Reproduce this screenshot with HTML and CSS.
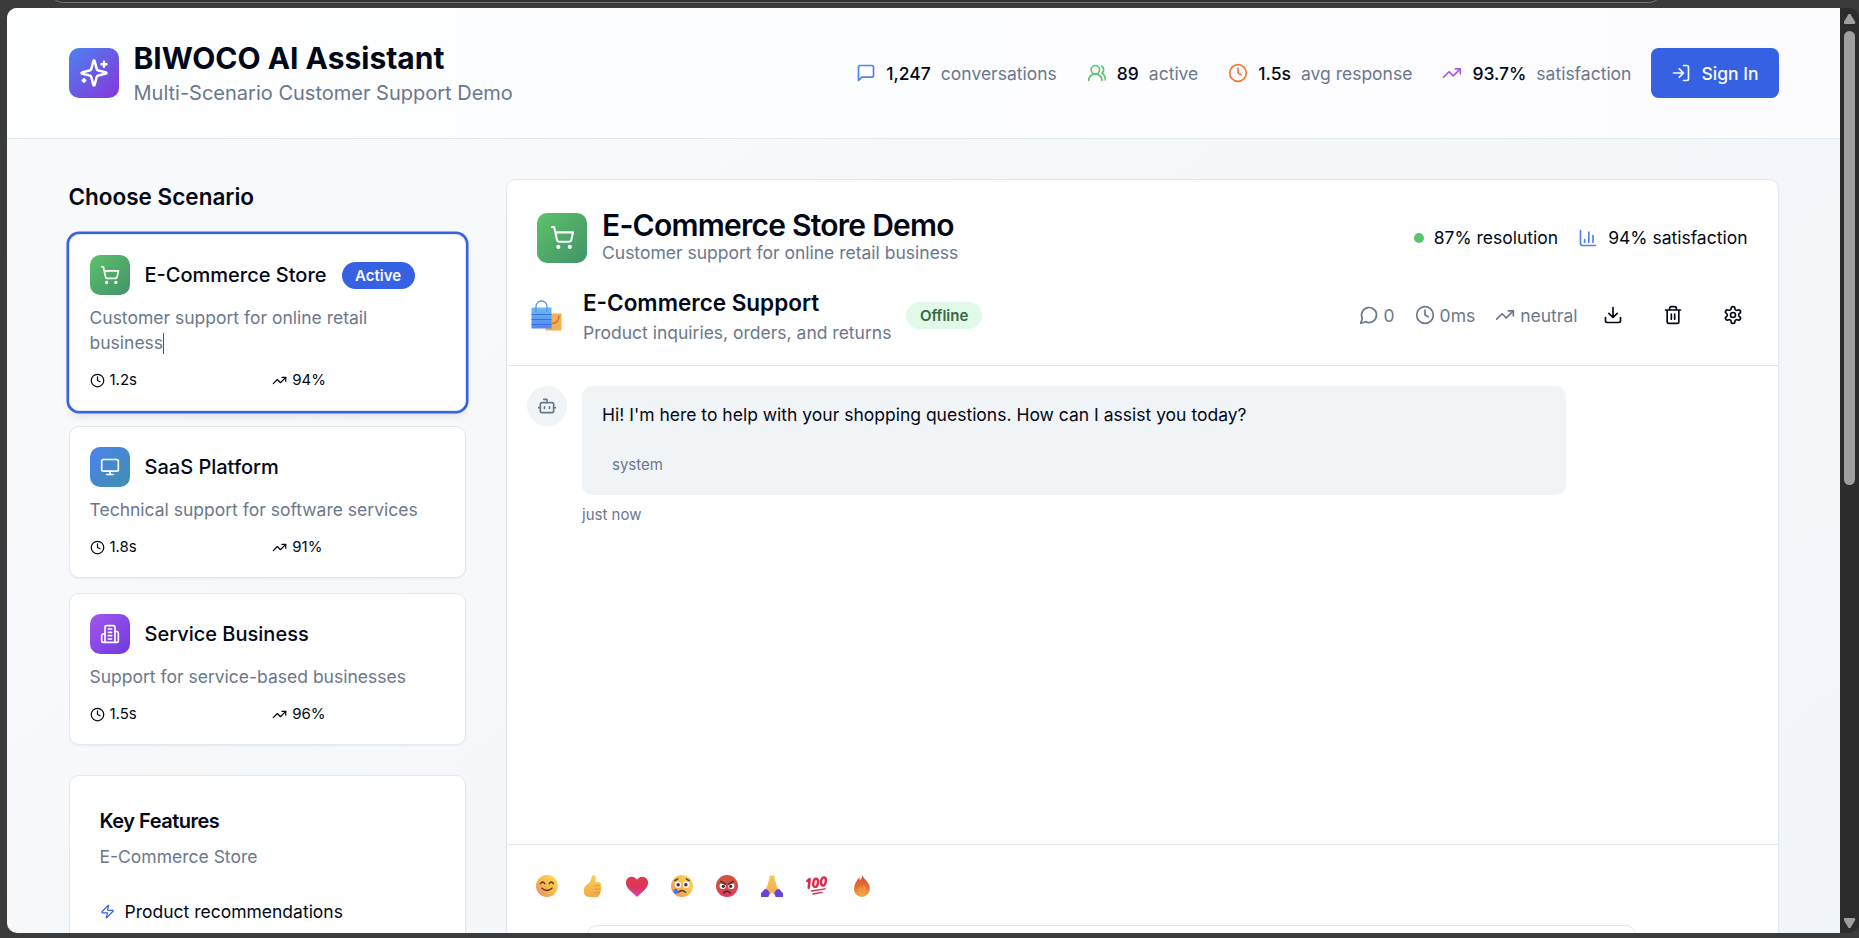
FILE: index.html
```html
<!DOCTYPE html>
<html lang="en">
<head>
<meta charset="utf-8">
<title>BIWOCO AI Assistant</title>
<link rel="stylesheet" href="styles.css">
</head>
<body>
<svg class="defs" width="0" height="0" aria-hidden="true">
  <defs>
    <linearGradient id="face" x1="1" y1="0" x2="0" y2="1"><stop offset="0" stop-color="#fbe05a"/><stop offset=".55" stop-color="#f6b84a"/><stop offset="1" stop-color="#e9836a"/></linearGradient>
    <linearGradient id="rage" x1="0" y1="0" x2="0" y2="1"><stop offset="0" stop-color="#cf5a3e"/><stop offset="1" stop-color="#dc3a58"/></linearGradient>
    <linearGradient id="heartfill" x1="0" y1="0" x2="0" y2="1"><stop offset="0" stop-color="#e23a4e"/><stop offset=".5" stop-color="#d93558"/><stop offset="1" stop-color="#e045b4"/></linearGradient>
    <linearGradient id="skin" x1="0" y1="0" x2="0" y2="1"><stop offset="0" stop-color="#fbcf52"/><stop offset="1" stop-color="#efa84a"/></linearGradient>
    <linearGradient id="flame" x1="0" y1="0" x2="0" y2="1"><stop offset="0" stop-color="#d9482f"/><stop offset=".6" stop-color="#e8743a"/><stop offset="1" stop-color="#f3b04a"/></linearGradient>
    <linearGradient id="bag" x1="0" y1="0" x2="0" y2="1"><stop offset="0" stop-color="#6bbcf5"/><stop offset="1" stop-color="#5087f2"/></linearGradient>
    <symbol id="i-clock" viewBox="0 0 24 24"><circle cx="12" cy="12" r="10"/><path d="M12 6v6l4 2"/></symbol>
    <symbol id="i-trend" viewBox="0 0 24 24"><path d="M22 7l-8.500 8.500-5-5L2 17"/><path d="M16 7h6v6"/></symbol>
    <symbol id="i-cart" viewBox="0 0 24 24"><circle cx="8" cy="21" r="1"/><circle cx="19" cy="21" r="1"/><path d="M2.050 2.050h2l2.660 12.420a2 2 0 0 0 2 1.580h9.780a2 2 0 0 0 1.950-1.570l1.650-7.430H5.120"/></symbol>
  </defs>
</svg>

<div class="browser">
  <div class="toolbar"><div class="address"></div></div>
  <div class="window">
    <div class="page">
      <header class="site-header">
        <div class="container header-row">
          <div class="brand">
            <span class="tile tile-lg brand-tile"><svg class="ic s30" viewBox="0 0 24 24"><path d="M9.937 15.500A2 2 0 0 0 8.500 14.063l-6.135-1.582a.5.5 0 0 1 0-.962L8.500 9.936A2 2 0 0 0 9.937 8.500l1.582-6.135a.5.5 0 0 1 .963 0L14.063 8.500A2 2 0 0 0 15.500 9.937l6.135 1.581a.5.5 0 0 1 0 .964L15.500 14.063a2 2 0 0 0-1.437 1.437l-1.582 6.135a.5.5 0 0 1-.963 0z"/><path d="M20 3v4M22 5h-4M4 17v2M5 18H3"/></svg></span>
            <div>
              <h1 class="brand-name">BIWOCO AI Assistant</h1>
              <p class="brand-sub">Multi-Scenario Customer Support Demo</p>
            </div>
          </div>
          <div class="header-right">
            <div class="stats">
              <div class="stat"><svg class="ic s20 blue" viewBox="0 0 24 24"><path d="M21 15a2 2 0 0 1-2 2H7l-4 4V5a2 2 0 0 1 2-2h14a2 2 0 0 1 2 2z"/></svg><b>1,247</b><span>conversations</span></div>
              <div class="stat"><svg class="ic s20 green" viewBox="0 0 24 24"><path d="M18 21a8 8 0 0 0-16 0"/><circle cx="10" cy="8" r="5"/><path d="M22 20c0-3.370-2-6.500-4-8a5 5 0 0 0-.45-8.300"/></svg><b>89</b><span>active</span></div>
              <div class="stat"><svg class="ic s20 orange"><use href="#i-clock"/></svg><b>1.5s</b><span>avg response</span></div>
              <div class="stat"><svg class="ic s20 purple"><use href="#i-trend"/></svg><b>93.7%</b><span>satisfaction</span></div>
            </div>
            <button class="sign-in"><svg class="ic s20" viewBox="0 0 24 24"><path d="M15 3h4a2 2 0 0 1 2 2v14a2 2 0 0 1-2 2h-4"/><path d="M10 17l5-5-5-5M15 12H3"/></svg>Sign In</button>
          </div>
        </div>
      </header>

      <main class="container layout">
        <aside>
          <h2 class="side-title">Choose Scenario</h2>
          <div class="scenarios">
            <article class="card scenario selected">
              <div class="scenario-head"><span class="tile green-tile"><svg class="ic s20"><use href="#i-cart"/></svg></span><h3>E-Commerce Store</h3><span class="badge badge-active">Active</span></div>
              <p class="desc">Customer support for online retail<br>business<span class="caret"></span></p>
              <div class="metrics"><span><svg class="ic s15"><use href="#i-clock"/></svg>1.2s</span><span><svg class="ic s15"><use href="#i-trend"/></svg>94%</span></div>
            </article>
            <article class="card scenario">
              <div class="scenario-head"><span class="tile blue-tile"><svg class="ic s20" viewBox="0 0 24 24"><rect x="2" y="3" width="20" height="14" rx="2"/><path d="M8 21h8M12 17v4"/></svg></span><h3>SaaS Platform</h3></div>
              <p class="desc">Technical support for software services</p>
              <div class="metrics"><span><svg class="ic s15"><use href="#i-clock"/></svg>1.8s</span><span><svg class="ic s15"><use href="#i-trend"/></svg>91%</span></div>
            </article>
            <article class="card scenario">
              <div class="scenario-head"><span class="tile purple-tile"><svg class="ic s20" viewBox="0 0 24 24"><path d="M6 22V4a2 2 0 0 1 2-2h8a2 2 0 0 1 2 2v18Z"/><path d="M6 12H4a2 2 0 0 0-2 2v6a2 2 0 0 0 2 2h2M18 9h2a2 2 0 0 1 2 2v9a2 2 0 0 1-2 2h-2M10 6h4M10 10h4M10 14h4M10 18h4"/></svg></span><h3>Service Business</h3></div>
              <p class="desc">Support for service-based businesses</p>
              <div class="metrics"><span><svg class="ic s15"><use href="#i-clock"/></svg>1.5s</span><span><svg class="ic s15"><use href="#i-trend"/></svg>96%</span></div>
            </article>
          </div>
          <section class="card features">
            <h3>Key Features</h3>
            <p class="features-sub">E-Commerce Store</p>
            <div class="feature"><svg class="ic s15 primary" viewBox="0 0 24 24"><path d="M4 14a1 1 0 0 1-.78-1.630l9.900-10.200a.5.5 0 0 1 .86.460l-1.920 6.020A1 1 0 0 0 13 10h7a1 1 0 0 1 .78 1.630l-9.900 10.200a.5.5 0 0 1-.86-.460l1.920-6.020A1 1 0 0 0 11 14z"/></svg>Product recommendations</div>
          </section>
        </aside>

        <section class="card chat">
          <div class="demo-head">
            <div class="demo-id">
              <span class="tile tile-lg green-tile"><svg class="ic s25"><use href="#i-cart"/></svg></span>
              <div><h2 class="demo-title">E-Commerce Store Demo</h2><p class="demo-sub">Customer support for online retail business</p></div>
            </div>
            <div class="demo-stats">
              <span><i class="dot"></i>87% resolution</span>
              <span><svg class="ic s20 blue" viewBox="0 0 24 24"><path d="M3 3v16a2 2 0 0 0 2 2h16M18 17V9M13 17V5M8 17v-3"/></svg>94% satisfaction</span>
            </div>
          </div>

          <div class="chat-head">
            <div class="agent">
              <svg class="bags" viewBox="0 0 41 35">
                <rect x="18.500" y="15.500" width="16" height="17" rx=".8" fill="#f2b04e"/>
                <path d="M32 17.500c0 5-2.500 8-7.500 8" fill="none" stroke="#d9693f" stroke-width="1.400"/>
                <path d="M5 9.500h19.500V30.500h-20V10.500z" fill="url(#bag)"/>
                <path d="M4.500 16.500h20M4.500 21.500h20M4.500 26.500h20" stroke="#3f6fda" stroke-width="1"/>
                <path d="M9 13.500V8.500a5.500 5.500 0 0 1 11 0v5" fill="none" stroke="#4f95df" stroke-width="1.300"/>
              </svg>
              <div><h3 class="agent-name">E-Commerce Support</h3><p class="agent-sub">Product inquiries, orders, and returns</p></div>
              <span class="badge badge-offline">Offline</span>
            </div>
            <div class="tools">
              <div class="session">
                <span><svg class="ic s20" viewBox="0 0 24 24"><path d="M7.900 20A9 9 0 1 0 4 16.100L2 22Z"/></svg>0</span>
                <span><svg class="ic s20"><use href="#i-clock"/></svg>0ms</span>
                <span><svg class="ic s20"><use href="#i-trend"/></svg>neutral</span>
              </div>
              <button class="icon-btn" aria-label="Download"><svg class="ic s20" viewBox="0 0 24 24"><path d="M21 15v4a2 2 0 0 1-2 2H5a2 2 0 0 1-2-2v-4M7 10l5 5 5-5M12 15V3"/></svg></button>
              <button class="icon-btn" aria-label="Delete"><svg class="ic s20" viewBox="0 0 24 24"><path d="M3 6h18M19 6v14c0 1-1 2-2 2H7c-1 0-2-1-2-2V6M8 6V4c0-1 1-2 2-2h4c1 0 2 1 2 2v2M10 11v6M14 11v6"/></svg></button>
              <button class="icon-btn" aria-label="Settings"><svg class="ic s20" viewBox="0 0 24 24"><path d="M12.220 2h-.44a2 2 0 0 0-2 2v.18a2 2 0 0 1-1 1.730l-.43.250a2 2 0 0 1-2 0l-.15-.08a2 2 0 0 0-2.730.730l-.22.380a2 2 0 0 0 .730 2.730l.15.100a2 2 0 0 1 1 1.720v.510a2 2 0 0 1-1 1.740l-.15.090a2 2 0 0 0-.730 2.730l.22.380a2 2 0 0 0 2.730.730l.15-.08a2 2 0 0 1 2 0l.43.250a2 2 0 0 1 1 1.730V20a2 2 0 0 0 2 2h.44a2 2 0 0 0 2-2v-.18a2 2 0 0 1 1-1.730l.43-.250a2 2 0 0 1 2 0l.15.080a2 2 0 0 0 2.730-.730l.22-.390a2 2 0 0 0-.730-2.730l-.15-.080a2 2 0 0 1-1-1.740v-.500a2 2 0 0 1 1-1.740l.15-.090a2 2 0 0 0 .730-2.730l-.22-.380a2 2 0 0 0-2.730-.730l-.15.080a2 2 0 0 1-2 0l-.43-.250a2 2 0 0 1-1-1.730V4a2 2 0 0 0-2-2z"/><circle cx="12" cy="12" r="3"/></svg></button>
            </div>
          </div>

          <div class="messages">
            <span class="avatar"><svg class="ic s20" viewBox="0 0 24 24"><path d="M12 8V4H8"/><rect x="4" y="8" width="16" height="12" rx="2"/><path d="M2 14h2M20 14h2M15 13v2M9 13v2"/></svg></span>
            <div class="message">
              <div class="bubble">
                <p>Hi! I'm here to help with your shopping questions. How can I assist you today?</p>
                <div class="source">system</div>
              </div>
              <p class="time">just now</p>
            </div>
          </div>

          <div class="composer">
            <div class="reactions">
              <svg viewBox="0 0 24 24"><circle cx="12" cy="12" r="12" fill="url(#face)"/><path d="M5 9.500q2.200-3.600 4.500 0M14.500 9.500q2.300-3.600 4.500 0M6.500 14.500q5.500 4.800 11 0" fill="none" stroke="#54322f" stroke-width="1.500" stroke-linecap="round"/></svg>
              <svg viewBox="0 0 24 24"><path d="M12.500.500c2-1 4 .6 3.600 3l-.8 4.500h4.200c2.200 0 2.900 2.200 1.800 3.500 1.400 1.200 1.200 3 .1 3.800 1 1.300.6 3-.5 3.700.5 1.500-.2 2.800-1.300 3.300 0 1.200-1 1.700-2.100 1.700H9.500C5 24 3 21.500 3 17.500c0-5 2.500-6.300 5.500-8.500 2.700-2.300 2.500-6.500 4-8.500z" fill="url(#skin)"/><path d="M14.500 11.500h6.500M15 15.400h6M15 19.200h5.500" stroke="#d88a3e" stroke-width=".8"/></svg>
              <svg viewBox="0 0 24 24"><path d="M12 5.300C14.500 1 20 .8 22.600 4c3.200 4.200.8 9-2.700 12.500L12 24l-7.900-7.500C.6 13-1.800 8.200 1.400 4 4 .8 9.500 1 12 5.300z" fill="url(#heartfill)"/></svg>
              <svg viewBox="0 0 24 24"><circle cx="12" cy="12" r="12" fill="url(#face)"/><circle cx="7.500" cy="10.500" r="3.500" fill="#fff"/><circle cx="16.500" cy="10.500" r="3.500" fill="#fff"/><circle cx="7.800" cy="10.700" r="1.900" fill="#493537"/><circle cx="16.200" cy="10.700" r="1.900" fill="#493537"/><path d="M4 6q2-.3 3.500-2M20 6q-2-.3-3.500-2M8 19q4-4.200 8 0" fill="none" stroke="#5a3530" stroke-width="1.400" stroke-linecap="round"/><rect x="3" y="15" width="4.300" height="5.500" rx="2" fill="#3478ec"/></svg>
              <svg viewBox="0 0 24 24"><circle cx="12" cy="12" r="12" fill="url(#rage)"/><circle cx="7.300" cy="12" r="3.400" fill="#fff"/><circle cx="16.700" cy="12" r="3.400" fill="#fff"/><path d="M3.500 8.500h7.500l-.5 2.500zM20.500 8.500H13l.5 2.500z" fill="#d24b45"/><circle cx="8" cy="12.400" r="1.800" fill="#432b35"/><circle cx="16" cy="12.400" r="1.800" fill="#432b35"/><path d="M5 7l5.500 3M19 7l-5.500 3M8.500 19.500q3.500-3.700 7 0" fill="none" stroke="#4b2630" stroke-width="1.600" stroke-linecap="round"/></svg>
              <svg viewBox="0 0 24 24"><path d="M11.800.5v19L6.500 23l-2.700-4.500 3.500-8L9.500 1.200q.8-1.500 2.300-.7zM12.200.5v19l5.300 3.500 2.700-4.500-3.500-8L14.500 1.200q-.8-1.500-2.300-.7z" fill="url(#skin)"/><path d="M12 1v17" stroke="#d4903f" stroke-width=".7"/><path d="M0 24v-4l4.500-5q4 1 5 5L8 24zM24 24v-4l-4.500-5q-4 1-5 5l1.500 4z" fill="#6943da"/></svg>
              <svg viewBox="0 0 24 24"><g fill="none" stroke="#d82d4d" stroke-linecap="round" stroke-linejoin="round"><path d="M1.500 6.500L4 4.500 3 14" stroke-width="2.800"/><ellipse cx="10.500" cy="8.500" rx="2.500" ry="4.500" transform="rotate(10 10.500 8.500)" stroke-width="2.600"/><ellipse cx="19" cy="7" rx="2.600" ry="4.500" transform="rotate(10 19 7)" stroke-width="2.600"/><path d="M6 17.500l15-2.300M7.500 20.700l10-1.800" stroke-width="1.500"/></g></svg>
              <svg viewBox="0 0 24 24"><path d="M12.500 0c.5 4 7.500 7 8 14 .3 5.500-3.500 10-8.500 10s-9-4-8.700-9.500c.2-4.200 3-8.500 5.700-11.700q.8 1.500.3 3.500Q12.500 4 12.500 0z" fill="url(#flame)"/><path d="M14 8c0 4 3.500 5.500 2.800 10q-1 4.500-4.800 4.500t-4.800-4.500c-.2-3.500 2.300-4.300 3.300-6.500.3 1.500.9 2 1.100 2.700C13 12.500 14 11 14 8z" fill="#f4a842" opacity=".5"/></svg>
            </div>
            <div class="input-row"><div class="message-input"></div></div>
          </div>
        </section>
      </main>
    </div>
    <div class="scrollbar"><i class="arrow up"></i><i class="thumb"></i><i class="arrow down"></i></div>
  </div>
</div>
</body>
</html>
```
FILE: styles.css
```css
* { box-sizing: border-box; margin: 0; padding: 0; }
body { overflow: hidden; font-family: Inter, "Liberation Sans", sans-serif; font-size: 17.5px; line-height: 25px; color: #020817; background: #3b3b3b; }
.defs { position: absolute; }
.browser { width: 1859px; height: 938px; display: flex; flex-direction: column; overflow: hidden; }
.toolbar { flex: 0 0 8px; padding-left: 47px; overflow: hidden; }
.address { width: 1618px; height: 34px; margin-top: -31px; border: 1px solid #747474; border-radius: 17px; background: #333; }
.window { height: 925px; display: flex; padding-left: 7px; }
.page { width: 1833px; height: 925px; overflow: hidden; border-radius: 10px 0 0 10px; background: linear-gradient(to bottom right, #f9fafc, #eff4f8) 0 0 / 100% 1500px; }
.container { width: 1750px; margin: 0 auto; padding: 0 20px; }

.ic { display: block; flex: none; fill: none; stroke: currentColor; stroke-width: 2; stroke-linecap: round; stroke-linejoin: round; }
.s15 { width: 15px; height: 15px; }
.s20 { width: 20px; height: 20px; }
.s25 { width: 25px; height: 25px; }
.s30 { width: 30px; height: 30px; }
.blue { color: #4c83ee; }
.green { color: #5bc46b; }
.orange { color: #ee7a38; }
.purple { color: #a259f0; }
.primary { color: #3761e3; }

.site-header { height: 131px; border-bottom: 1px solid #e2e8f0; background: linear-gradient(to right, #fdfefe, #fcfcfe); }
.header-row { height: 130px; display: flex; align-items: center; justify-content: space-between; }
.brand { display: flex; align-items: center; gap: 15px; }
.tile { flex: none; width: 40px; height: 40px; display: flex; align-items: center; justify-content: center; border-radius: 10px; color: #fff; }
.tile-lg { width: 50px; height: 50px; }
.brand-tile { background: linear-gradient(to bottom right, #4b82ef, #8735dc); }
.green-tile { background: linear-gradient(to bottom right, #5cc269, #43926a); }
.blue-tile { background: linear-gradient(to bottom right, #4b82ef, #3f90ad); }
.purple-tile { background: linear-gradient(to bottom right, #a058ee, #7038df); }
.brand-name { font-size: 30px; line-height: 40px; font-weight: 700; }
.brand-sub { font-size: 20px; line-height: 30px; color: #6b778c; }
.header-right { display: flex; align-items: center; gap: 20px; }
.stats { display: flex; gap: 30px; }
.stat { display: flex; align-items: center; gap: 10px; }
.stat b { font-weight: 500; }
.stat span { color: #6b778c; }
.sign-in { height: 50px; display: flex; align-items: center; gap: 10px; padding: 0 20px; border: 0; border-radius: 7.5px; background: #3761e3; color: #f8fafc; font: 500 17.5px/25px Inter, sans-serif; }

.layout { display: grid; grid-template-columns: 397.5px 1fr; gap: 40px; padding-top: 40px; }
.side-title { margin-bottom: 20px; font-size: 22.5px; line-height: 35px; font-weight: 600; }
.card { border: 1px solid #e2e8f0; border-radius: 10px; background: #fff; box-shadow: 0 1px 2px rgba(0,0,0,.05); }
.scenarios { display: flex; flex-direction: column; gap: 15px; }
.scenario { padding: 20px; }
.selected { box-shadow: 0 0 0 2.5px #3761e3, 0 5px 8px rgba(0,0,0,.1); }
.scenario-head { display: flex; align-items: center; gap: 15px; margin-bottom: 10px; }
.scenario-head h3 { font-size: 20px; line-height: 30px; font-weight: 500; }
.badge { height: 27px; padding: 0 12.5px; border: 1px solid transparent; border-radius: 14px; font-size: 15px; line-height: 25px; font-weight: 600; }
.badge-active { background: #3761e3; color: #f8fafc; }
.badge-offline { background: #e0f9e8; color: #39683f; }
.desc { margin-bottom: 15px; color: #6b778c; }
.caret { display: inline-block; width: 1px; height: 21px; vertical-align: -5px; background: #4b5563; }
.metrics { display: grid; grid-template-columns: 1fr 1fr; gap: 10px; font-size: 15px; line-height: 20px; }
.metrics span { display: flex; align-items: center; gap: 5px; }
.features { margin-top: 30px; padding: 30px; }
.features h3 { margin-bottom: 7.5px; font-size: 20px; line-height: 30px; font-weight: 600; letter-spacing: -.5px; }
.features-sub { margin-bottom: 30px; color: #6b778c; }
.feature { display: flex; align-items: center; gap: 10px; }

.chat { height: 900px; }
.demo-head { display: flex; align-items: center; justify-content: space-between; padding: 30px 30px 0; }
.demo-id { display: flex; align-items: center; gap: 15px; }
.demo-title { font-size: 30px; line-height: 30px; font-weight: 600; letter-spacing: -.75px; }
.demo-sub, .agent-sub { color: #6b778c; }
.demo-stats { display: flex; gap: 20px; }
.demo-stats span { display: flex; align-items: center; gap: 10px; }
.dot { width: 10px; height: 10px; border-radius: 50%; background: #5bc46b; }
.chat-head { display: flex; align-items: center; justify-content: space-between; padding: 20px; border-bottom: 1px solid #e2e8f0; }
.agent { display: flex; align-items: center; gap: 15px; }
.bags { width: 41px; height: 35px; }
.agent-name { font-size: 22.5px; line-height: 35px; font-weight: 600; }
.tools { display: flex; align-items: center; gap: 10px; }
.session { display: flex; gap: 20px; color: #6b778c; }
.session span { display: flex; align-items: center; gap: 5px; }
.icon-btn { width: 50px; height: 45px; display: flex; align-items: center; justify-content: center; border: 0; background: none; color: #020817; }
.messages { height: 478px; display: flex; align-items: flex-start; gap: 15px; padding: 20px; }
.avatar { flex: none; width: 40px; height: 40px; display: flex; align-items: center; justify-content: center; border-radius: 50%; background: #f1f4f7; color: #6b778c; }
.message { width: 984px; }
.bubble { padding: 15px 20px; border-radius: 10px; background: #f1f4f7; }
.bubble p { line-height: 28.4px; }
.source { margin-top: 10px; padding: 10px 10px 0; border-top: 1px solid #eff2f5; font-size: 15px; line-height: 30px; color: #6b778c; }
.time { margin-top: 10px; font-size: 15px; line-height: 20px; color: #6b778c; }
.composer { padding: 30px 28.500px; border-top: 1px solid #e2e8f0; }
.reactions { display: flex; gap: 23px; }
.reactions svg { width: 22px; height: 22px; }
.input-row { padding: 28px 113px 0 51.500px; }
.message-input { height: 50px; border: 1px solid #e2e8f0; border-radius: 10px; }

.scrollbar { width: 19px; height: 925px; display: flex; flex-direction: column; align-items: center; padding: 6px 0 5px; border-radius: 0 10px 10px 0; background: #2c2c2c; }
.arrow { width: 12px; height: 10px; background: #9f9f9f; }
.up { clip-path: polygon(42% 0, 58% 0, 100% 85%, 92% 100%, 8% 100%, 0 85%); }
.down { clip-path: polygon(8% 0, 92% 0, 100% 15%, 58% 100%, 42% 100%, 0 15%); }
.thumb { width: 11px; height: 454px; margin: 7px 0 auto; border-radius: 6px; background: #9f9f9f; }
```
